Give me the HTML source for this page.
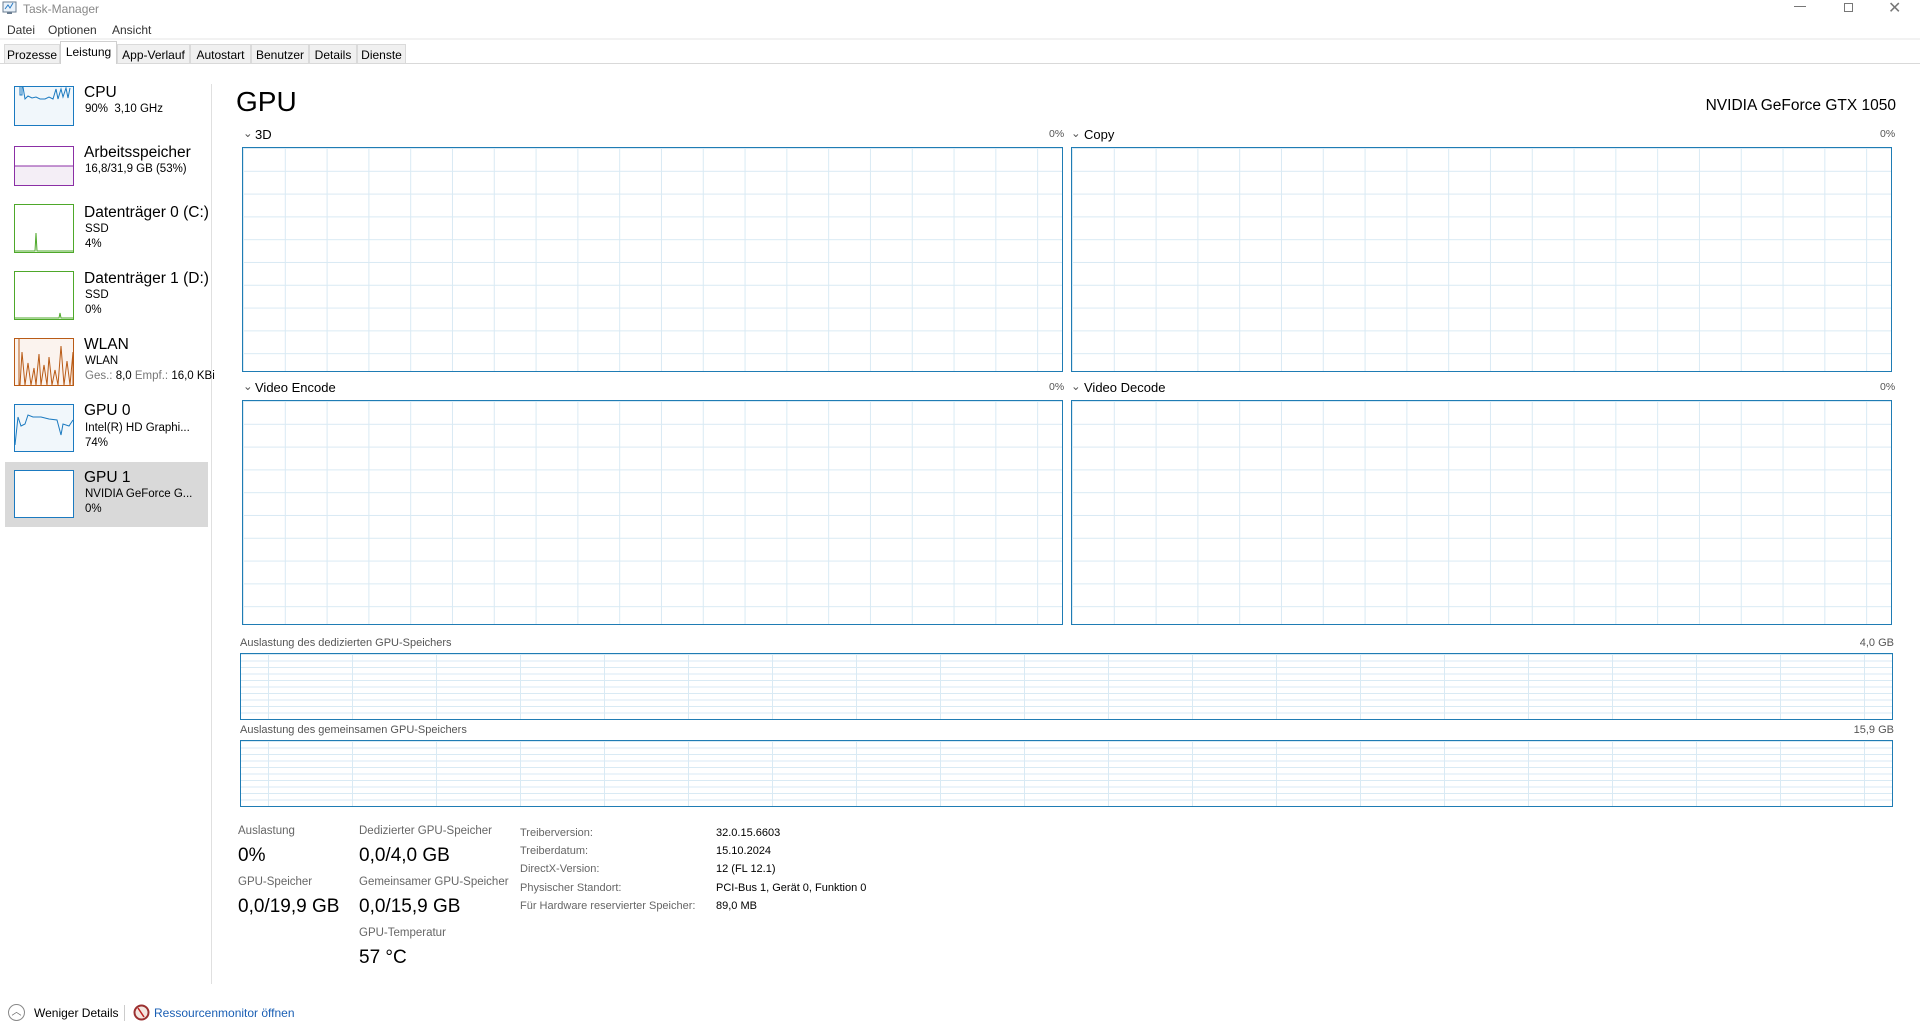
<!DOCTYPE html>
<html><head><meta charset="utf-8"><style>
*{margin:0;padding:0;box-sizing:border-box}
body{width:1920px;height:1031px;background:#fff;font-family:"Liberation Sans",sans-serif;color:#000;position:relative;overflow:hidden}
.a{position:absolute;white-space:nowrap}
.g{position:absolute;border:1px solid #1f7cb4;background-color:#fff;
background-image:linear-gradient(to right,#d9eaf4 1px,transparent 1px),linear-gradient(to bottom,#d9eaf4 1px,transparent 1px);
background-size:41.8px 22.8px;}
.m{position:absolute;border:1px solid #1f7cb4;background-color:#fff;
background-image:linear-gradient(to right,#d9eaf4 1px,transparent 1px),linear-gradient(to bottom,#d9eaf4 1px,transparent 1px);
background-size:84px 6.5px;background-position:27px 0,0 0}
.th{position:absolute;left:14px;width:60px;border:1px solid}
.t1{font-size:15.5px;color:#000}
.t2{font-size:11.5px;color:#000}
.lab{font-size:11.5px;color:#666}
.sm{font-size:11.5px;color:#555}
.big{font-size:19px}
.tab{position:absolute;top:44px;height:19px;font-size:12px;padding-top:3px;text-align:center;border:1px solid #dadada;border-bottom:none;background:#f0f0f0}
</style></head><body>
<svg class="a" style="left:2px;top:1px" width="16" height="14"><rect x="1" y="1" width="13" height="10" fill="#eaf2fa" stroke="#6a7d91"/><path d="M3 8l3-4 2 3 3-5" stroke="#2a7bc4" fill="none"/><rect x="5" y="11" width="5" height="2" fill="#6a7d91"/></svg>
<div class="a" style="left:23px;top:2px;font-size:12px;color:#888">Task-Manager</div>
<div class="a" style="left:1794px;top:6px;width:12px;height:1px;background:#777"></div>
<div class="a" style="left:1844px;top:3px;width:9px;height:9px;border:1px solid #777"></div>
<div class="a" style="left:1888px;top:-2px;font-size:16px;color:#777">✕</div>
<div class="a" style="left:7px;top:23px;font-size:12px;color:#333">Datei</div>
<div class="a" style="left:48px;top:23px;font-size:12px;color:#333">Optionen</div>
<div class="a" style="left:112px;top:23px;font-size:12px;color:#333">Ansicht</div>
<div class="a" style="left:0;top:63px;width:1920px;height:1px;background:#d9d9d9"></div>
<div class="a" style="left:0;top:38px;width:1920px;height:2px;background:#f2f2f2"></div>
<div class="tab" style="left:4px;width:56px">Prozesse</div>
<div class="tab" style="left:60px;top:41px;height:23px;width:57px;background:#fff;border-color:#d0d0d0">Leistung</div>
<div class="tab" style="left:117px;width:73px">App-Verlauf</div>
<div class="tab" style="left:190px;width:61px">Autostart</div>
<div class="tab" style="left:251px;width:58px">Benutzer</div>
<div class="tab" style="left:309px;width:48px">Details</div>
<div class="tab" style="left:357px;width:49px">Dienste</div>
<!-- sidebar -->
<div class="a" style="left:211px;top:84px;width:1px;height:900px;background:#e0e0e0"></div>
<div class="th" style="top:86px;height:40px;border-color:#1b7ac0;background:#f1f7fb"><svg width="58" height="38"><path d="M5 0v8h2V0M8 0l2 12 3-3 4 2 4-1 4 2 5 0 4-2 4 2 3-10 2 10 3-10 2 8 3-9 2 10 2-10" fill="none" stroke="#1b7ac0"/></svg></div>
<div class="a t1" style="left:84px;top:84px">CPU</div>
<div class="a t2" style="left:85px;top:103px">90%&nbsp; 3,10 GHz</div>
<div class="th" style="top:146px;height:40px;border-color:#8b2fa5;background:linear-gradient(#fff 50%,#f4eef6 50%)"><svg width="58" height="38"><path d="M0 19h58" stroke="#8b2fa5"/></svg></div>
<div class="a t1" style="left:84px;top:144px">Arbeitsspeicher</div>
<div class="a t2" style="left:85px;top:163px">16,8/31,9 GB (53%)</div>
<div class="th" style="top:204px;height:49px;border-color:#4ea82a"><svg width="58" height="47"><path d="M0 46h20l1-18 1 18h36" fill="none" stroke="#4ea82a"/></svg></div>
<div class="a t1" style="left:84px;top:204px">Datenträger 0 (C:)</div>
<div class="a t2" style="left:85px;top:223px">SSD</div>
<div class="a t2" style="left:85px;top:238px">4%</div>
<div class="th" style="top:271px;height:49px;border-color:#4ea82a"><svg width="58" height="47"><path d="M0 46h44l1-5 1 5h12" fill="none" stroke="#4ea82a"/></svg></div>
<div class="a t1" style="left:84px;top:270px">Datenträger 1 (D:)</div>
<div class="a t2" style="left:85px;top:289px">SSD</div>
<div class="a t2" style="left:85px;top:304px">0%</div>
<div class="th" style="top:338px;height:48px;border-color:#b95b16;background:#fbf3ee"><svg width="58" height="46"><path d="M4 0v46M5 46l2-33 3 33 3-22 3 22 3-17 2 17 3-31 2 31 3-20 3 20 2-28 3 28 3-15 3 15 3-39 3 39 3-24 3 24 3-33v33" fill="none" stroke="#b95b16"/></svg></div>
<div class="a t1" style="left:84px;top:336px">WLAN</div>
<div class="a t2" style="left:85px;top:355px">WLAN</div>
<div class="a t2" style="left:85px;top:370px;color:#777">Ges.: <span style="color:#000">8,0</span> Empf.: <span style="color:#000">16,0 KBi</span></div>
<div class="th" style="top:404px;height:48px;border-color:#1b7ac0;background:#f1f7fb"><svg width="58" height="46"><path d="M0 40l3-28 3 9 4-2 3-9 5 2 8 0 8 2 8 1 4 15 2-11 6 2 4-6" fill="none" stroke="#1b7ac0"/></svg></div>
<div class="a t1" style="left:84px;top:402px">GPU 0</div>
<div class="a t2" style="left:85px;top:422px">Intel(R) HD Graphi...</div>
<div class="a t2" style="left:85px;top:437px">74%</div>
<div class="a" style="left:5px;top:462px;width:203px;height:65px;background:#d9d9d9"></div>
<div class="th" style="top:470px;height:48px;border-color:#1b7ac0;background:#fff"></div>
<div class="a t1" style="left:84px;top:469px">GPU 1</div>
<div class="a t2" style="left:85px;top:488px">NVIDIA GeForce G...</div>
<div class="a t2" style="left:85px;top:503px">0%</div>
<!-- main -->
<div class="a" style="left:236px;top:86px;font-size:28px">GPU</div>
<div class="a" style="right:24px;top:97px;font-size:15.5px">NVIDIA GeForce GTX 1050</div>
<div class="a sm" style="left:243px;top:126px">⌄</div><div class="a" style="left:255px;top:127px;font-size:13px">3D</div>
<div class="a sm" style="left:1049px;top:128px;font-size:10.5px">0%</div>
<div class="a sm" style="left:1071px;top:126px">⌄</div><div class="a" style="left:1084px;top:127px;font-size:13px">Copy</div>
<div class="a sm" style="left:1880px;top:128px;font-size:10.5px">0%</div>
<div class="g" style="left:242px;top:147px;width:821px;height:225px"></div>
<div class="g" style="left:1071px;top:147px;width:821px;height:225px"></div>
<div class="a sm" style="left:243px;top:379px">⌄</div><div class="a" style="left:255px;top:380px;font-size:13px">Video Encode</div>
<div class="a sm" style="left:1049px;top:381px;font-size:10.5px">0%</div>
<div class="a sm" style="left:1071px;top:379px">⌄</div><div class="a" style="left:1084px;top:380px;font-size:13px">Video Decode</div>
<div class="a sm" style="left:1880px;top:381px;font-size:10.5px">0%</div>
<div class="g" style="left:242px;top:400px;width:821px;height:225px"></div>
<div class="g" style="left:1071px;top:400px;width:821px;height:225px"></div>
<div class="a sm" style="left:240px;top:637px;font-size:11px">Auslastung des dedizierten GPU-Speichers</div>
<div class="a sm" style="right:26px;top:637px;font-size:11px">4,0 GB</div>
<div class="m" style="left:240px;top:653px;width:1653px;height:67px"></div>
<div class="a sm" style="left:240px;top:724px;font-size:11px">Auslastung des gemeinsamen GPU-Speichers</div>
<div class="a sm" style="right:26px;top:724px;font-size:11px">15,9 GB</div>
<div class="m" style="left:240px;top:740px;width:1653px;height:67px"></div>
<!-- stats -->
<div class="a lab" style="left:238px;top:825px">Auslastung</div>
<div class="a big" style="left:238px;top:845px">0%</div>
<div class="a lab" style="left:238px;top:876px">GPU-Speicher</div>
<div class="a big" style="left:238px;top:896px">0,0/19,9 GB</div>
<div class="a lab" style="left:359px;top:825px">Dedizierter GPU-Speicher</div>
<div class="a big" style="left:359px;top:845px">0,0/4,0 GB</div>
<div class="a lab" style="left:359px;top:876px">Gemeinsamer GPU-Speicher</div>
<div class="a big" style="left:359px;top:896px">0,0/15,9 GB</div>
<div class="a lab" style="left:359px;top:927px">GPU-Temperatur</div>
<div class="a big" style="left:359px;top:947px">57 °C</div>
<div class="a lab" style="left:520px;top:824px;line-height:18.2px;font-size:11px">Treiberversion:<br>Treiberdatum:<br>DirectX-Version:<br>Physischer Standort:<br>Für Hardware reservierter Speicher:</div>
<div class="a" style="left:716px;top:824px;line-height:18.2px;font-size:11px">32.0.15.6603<br>15.10.2024<br>12 (FL 12.1)<br>PCI-Bus 1, Gerät 0, Funktion 0<br>89,0 MB</div>
<!-- footer -->
<div class="a" style="left:8px;top:1004px;width:17px;height:17px;border:1px solid #888;border-radius:50%;font-size:10px;color:#666;text-align:center;line-height:15px">︿</div>
<div class="a" style="left:34px;top:1006px;font-size:12px">Weniger Details</div>
<div class="a" style="left:124px;top:1005px;width:1px;height:16px;background:#ccc"></div>
<svg class="a" style="left:133px;top:1004px" width="17" height="17"><circle cx="8.5" cy="8.5" r="7" fill="#f4e6e0" stroke="#9a3030" stroke-width="2"/><path d="M5 4l6 9" stroke="#c02020" stroke-width="1.5"/></svg>
<div class="a" style="left:154px;top:1006px;font-size:12px;color:#1a5fb4">Ressourcenmonitor öffnen</div>
</body></html>
